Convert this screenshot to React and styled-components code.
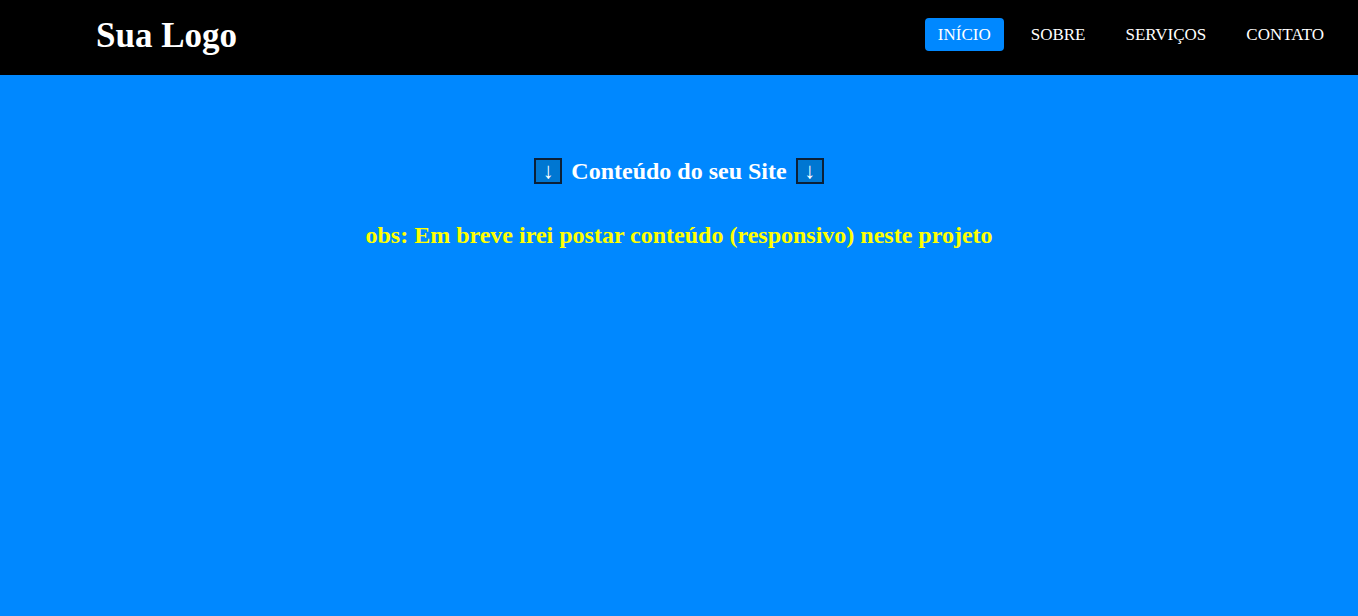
import React from "react";
import styled, { createGlobalStyle } from "styled-components";

const GlobalStyle = createGlobalStyle`
  html, body { margin: 0; padding: 0; }
  body {
    background: #0088ff;
    font-family: "Liberation Serif", "Times New Roman", serif;
    min-height: 100vh;
  }
`;

const Header = styled.header`
  height: 75px;
  background: #000;
  display: flex;
  align-items: center;
  justify-content: space-between;
  padding: 0 21px 0 96px;
  box-sizing: border-box;
`;

const Logo = styled.div`
  color: #fff;
  font-weight: bold;
  font-size: 35px;
  line-height: 1;
  margin-top: -5px;
`;

const Nav = styled.nav`
  display: flex;
  align-items: center;
  gap: 14px;
  margin-top: -6px;
`;

const NavLink = styled.a`
  display: block;
  color: #fff;
  text-decoration: none;
  font-size: 17px;
  line-height: 19px;
  padding: 7px 13px;
  border-radius: 4px;
  background: ${(p) => (p.$active ? "#0088ff" : "transparent")};
`;

const Main = styled.main`
  display: flex;
  flex-direction: column;
  align-items: center;
  padding-top: 82px;
`;

const Title = styled.h2`
  margin: 0;
  display: flex;
  align-items: center;
  gap: 9px;
  color: #fff;
  font-size: 24px;
  font-weight: bold;
  line-height: 28px;
`;

const ArrowBox = styled.span`
  display: inline-flex;
  align-items: center;
  justify-content: center;
  width: 28px;
  height: 26px;
  box-sizing: border-box;
  border: 2px solid #0b2038;
  background: #0077d2;
  color: #fff;
  font-family: "Liberation Serif", serif;
  font-weight: normal;
  font-size: 22px;
  line-height: 1;
  margin-top: -1px;
`;

const Note = styled.h3`
  margin: 36px 0 0;
  color: #ffff00;
  font-size: 24px;
  font-weight: bold;
  line-height: 28px;
  text-align: center;
`;

const links = ["INÍCIO", "SOBRE", "SERVIÇOS", "CONTATO"];

export default function App() {
  return (
    <>
      <GlobalStyle />
      <Header>
        <Logo>Sua Logo</Logo>
        <Nav>
          {links.map((l, i) => (
            <NavLink key={l} href="#" $active={i === 0}>
              {l}
            </NavLink>
          ))}
        </Nav>
      </Header>
      <Main>
        <Title>
          <ArrowBox>↓</ArrowBox>
          Conteúdo do seu Site
          <ArrowBox>↓</ArrowBox>
        </Title>
        <Note>obs: Em breve irei postar conteúdo (responsivo) neste projeto</Note>
      </Main>
    </>
  );
}
